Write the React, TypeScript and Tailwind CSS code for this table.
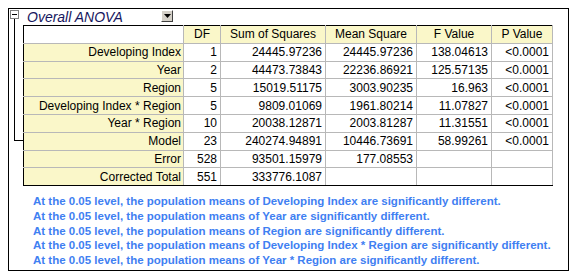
import React from 'react';

type Row = { label: string; df: string; ss: string; ms: string; f: string; p: string };

const rows: Row[] = [
  { label: 'Developing Index', df: '1', ss: '24445.97236', ms: '24445.97236', f: '138.04613', p: '<0.0001' },
  { label: 'Year', df: '2', ss: '44473.73843', ms: '22236.86921', f: '125.57135', p: '<0.0001' },
  { label: 'Region', df: '5', ss: '15019.51175', ms: '3003.90235', f: '16.963', p: '<0.0001' },
  { label: 'Developing Index * Region', df: '5', ss: '9809.01069', ms: '1961.80214', f: '11.07827', p: '<0.0001' },
  { label: 'Year * Region', df: '10', ss: '20038.12871', ms: '2003.81287', f: '11.31551', p: '<0.0001' },
  { label: 'Model', df: '23', ss: '240274.94891', ms: '10446.73691', f: '58.99261', p: '<0.0001' },
  { label: 'Error', df: '528', ss: '93501.15979', ms: '177.08553', f: '', p: '' },
  { label: 'Corrected Total', df: '551', ss: '333776.1087', ms: '', f: '', p: '' },
];

const notes = [
  'Developing Index',
  'Year',
  'Region',
  'Developing Index * Region',
  'Year * Region',
];

const headCell = 'bg-[#faf7c9] border border-[#b8b8b8] text-center font-normal px-[2px]';
const labelCell = 'bg-[#faf7c9] border border-[#b8b8b8] text-right pr-[2px] whitespace-nowrap';
const numCell = 'bg-white border border-[#b8b8b8] text-right pr-[3px] whitespace-nowrap';

export default function App() {
  return (
    <div className="w-[576px] h-[277px] bg-white pt-[8px] pl-[8px] font-['Liberation_Sans',Arial,sans-serif] text-black">
      <div className="relative w-[561px] h-[263px] border border-black">
        {/* tree connector */}
        <div className="absolute left-[5px] top-[9px] w-[9px] h-[123px] border-l border-b border-black" />

        {/* title row */}
        <div className="flex items-start h-[16px]">
          <div className="relative z-10 mt-[1px] ml-[1px] w-[9px] h-[9px] border border-[#808080] bg-white flex items-center justify-center">
            <div className="w-[5px] h-px bg-black" />
          </div>
          <div className="ml-[8px] w-[134px] text-[14px] leading-[16px] italic text-[#16165e] whitespace-nowrap">
            Overall ANOVA
          </div>
          <div className="mt-[1px] w-[12px] h-[12px] bg-[#d4d0c8] border border-t-white border-l-white border-r-[#404040] border-b-[#404040] flex items-center justify-center">
            <svg width="7" height="4" viewBox="0 0 7 4">
              <polygon points="0,0 7,0 3.5,4" fill="#000" />
            </svg>
          </div>
        </div>

        {/* table */}
        <table className="ml-[14px] table-fixed border-collapse text-[12px] leading-none border-l border-t border-b border-black border-r-[#808080] w-[529px]">
          <colgroup>
            <col className="w-[160px]" />
            <col className="w-[37px]" />
            <col className="w-[105px]" />
            <col className="w-[91px]" />
            <col className="w-[75px]" />
            <col className="w-[61px]" />
          </colgroup>
          <thead>
            <tr className="h-[17.8px]">
              <th className="bg-white border border-[#b8b8b8] border-l-black border-t-black" />
              <th className={headCell + ' border-t-black'}>DF</th>
              <th className={headCell + ' border-t-black'}>Sum of Squares</th>
              <th className={headCell + ' border-t-black'}>Mean Square</th>
              <th className={headCell + ' border-t-black'}>F Value</th>
              <th className={headCell + ' border-t-black'}>P Value</th>
            </tr>
          </thead>
          <tbody>
            {rows.map((r, i) => {
              const last = i === rows.length - 1 ? ' border-b-black' : '';
              return (
                <tr key={r.label} className="h-[17.8px]">
                  <td className={labelCell + ' border-l-black' + last}>{r.label}</td>
                  <td className={numCell + last}>{r.df}</td>
                  <td className={numCell + last}>{r.ss}</td>
                  <td className={numCell + last}>{r.ms}</td>
                  <td className={numCell + last}>{r.f}</td>
                  <td className={numCell + last}>{r.p}</td>
                </tr>
              );
            })}
          </tbody>
        </table>

        {/* conclusions */}
        <div className="ml-[24px] mt-[8px] flex flex-col text-[11.5px] leading-[14.7px] font-bold text-[#3f80f2]">
          {notes.map((n) => (
            <div key={n} className="whitespace-nowrap">
              At the 0.05 level, the population means of {n} are significantly different.
            </div>
          ))}
        </div>
      </div>
    </div>
  );
}
